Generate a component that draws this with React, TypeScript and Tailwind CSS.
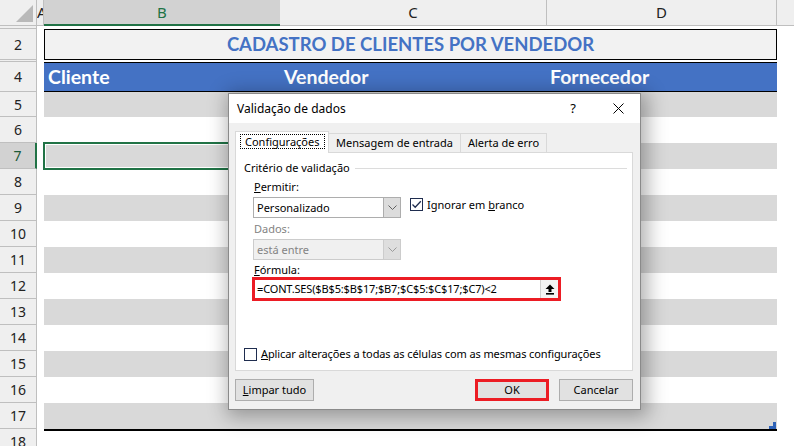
import React from "react";

const UI = "font-['Noto_Sans',sans-serif]";
const XL = "font-['Lato',sans-serif]";

type Kind = "hidden" | "title" | "head" | "band" | "plain" | "last";

interface RowDef {
  n: number;
  h: string;
  kind: Kind;
}

const ROWS: RowDef[] = [
  { n: 1, h: "h-[3px]", kind: "hidden" },
  { n: 2, h: "h-[31px]", kind: "title" },
  { n: 3, h: "h-[2px]", kind: "hidden" },
  { n: 4, h: "h-[30px]", kind: "head" },
  { n: 5, h: "h-[25px]", kind: "band" },
  { n: 6, h: "h-[26px]", kind: "plain" },
  { n: 7, h: "h-[26px]", kind: "band" },
  { n: 8, h: "h-[26px]", kind: "plain" },
  { n: 9, h: "h-[26px]", kind: "band" },
  { n: 10, h: "h-[26px]", kind: "plain" },
  { n: 11, h: "h-[26px]", kind: "band" },
  { n: 12, h: "h-[26px]", kind: "plain" },
  { n: 13, h: "h-[26px]", kind: "band" },
  { n: 14, h: "h-[26px]", kind: "plain" },
  { n: 15, h: "h-[26px]", kind: "band" },
  { n: 16, h: "h-[26px]", kind: "plain" },
  { n: 17, h: "h-[26px]", kind: "band" },
  { n: 18, h: "h-[26px]", kind: "last" },
];

function ColumnHeaders() {
  return (
    <div className={`flex h-[26px] bg-[#efefef] text-[15px] text-[#222] ${UI}`}>
      <div className="relative w-[37px] border-r border-b border-[#bfbfbf]">
        <svg width="36" height="25" className="absolute left-0 top-0">
          <polygon points="33,5 33,22 16,22" fill="#b9b9b9" />
        </svg>
      </div>
      <div className="w-[7px] overflow-hidden border-r border-b border-[#bfbfbf] leading-[24px]">A</div>
      <div className="flex w-[236px] items-center justify-center border-b-2 border-[#217346] bg-[#d2d2d2] text-[#217346]">
        B
      </div>
      <div className="flex w-[267px] items-center justify-center border-r border-b border-[#bfbfbf]">C</div>
      <div className="flex w-[230px] items-center justify-center border-r border-b border-[#bfbfbf]">D</div>
      <div className="flex-1 border-b border-[#bfbfbf]" />
    </div>
  );
}

function SheetRow({ row }: { row: RowDef }) {
  const active = row.n === 7;
  return (
    <div className={`flex ${row.h}`}>
      <div
        className={`flex w-[37px] items-center justify-center border-b border-[#bfbfbf] text-[14px] ${UI} ${
          active ? "border-r-2 border-r-[#217346] bg-[#d2d2d2] text-[#1d5a38]" : "border-r bg-[#efefef] text-[#222]"
        }`}
      >
        {row.kind !== "hidden" && row.n}
      </div>
      <div className="w-[7px]" />
      {row.kind === "title" && (
        <div
          className={`flex w-[733px] items-center justify-center border border-black bg-[#f2f2f2] text-[18.5px] font-bold text-[#4472c4] ${XL}`}
        >
          CADASTRO DE CLIENTES POR VENDEDOR
        </div>
      )}
      {row.kind === "head" && (
        <div className={`flex w-[733px] border-y border-black bg-[#4472c4] text-[19.5px] font-bold text-white ${XL}`}>
          <div className="w-[236px] pl-[4px] leading-[28px]">Cliente</div>
          <div className="w-[267px] pl-[4px] leading-[28px]">Vendedor</div>
          <div className="w-[230px] pl-[3px] leading-[28px]">Fornecedor</div>
        </div>
      )}
      {row.kind === "band" && (
        <div className="relative flex w-[733px] bg-[#d9d9d9]">
          {active && (
            <div className="absolute -left-px -top-px h-[28px] w-[238px] border-2 border-[#217346]">
              <div className="h-full w-full border border-white" />
            </div>
          )}
          {row.n === 17 && (
            <svg width="7" height="7" className="absolute bottom-0 right-[1px]">
              <path d="M4 0H7V7H0V4H4Z" fill="#2e62b8" />
            </svg>
          )}
        </div>
      )}
      {row.kind === "last" && <div className="w-[733px] border-t-2 border-black" />}
      <div className="flex-1" />
    </div>
  );
}

function Chevron({ color }: { color: string }) {
  return (
    <svg width="9" height="6" viewBox="0 0 9 6">
      <polyline points="0.5,0.5 4.5,4.5 8.5,0.5" fill="none" stroke={color} strokeWidth="1" />
    </svg>
  );
}

function Select({ value, disabled }: { value: string; disabled?: boolean }) {
  return (
    <div
      className={`flex h-[21px] w-[148px] border ${
        disabled ? "border-[#cccccc] bg-[#f0f0f0] text-[#838383]" : "border-[#adadad] bg-white text-black"
      }`}
    >
      <div className="flex-1 pl-[3px] leading-[19px]">{value}</div>
      <div
        className={`flex w-[17px] items-center justify-center border-l ${
          disabled ? "border-[#cccccc] bg-[#dedede]" : "border-[#adadad] bg-[#dcdcdc]"
        }`}
      >
        <Chevron color={disabled ? "#9a9a9a" : "#606060"} />
      </div>
    </div>
  );
}

function CheckBox({ checked }: { checked?: boolean }) {
  return (
    <span className="flex h-[13px] w-[13px] shrink-0 items-center justify-center border border-[#1f2d4f] bg-white">
      {checked && (
        <svg width="11" height="11" viewBox="0 0 11 11">
          <polyline points="1.5,5.5 4.2,8.2 9.8,2.2" fill="none" stroke="#1f2d4f" strokeWidth="1.3" />
        </svg>
      )}
    </span>
  );
}

function Button({ children, className }: { children: React.ReactNode; className?: string }) {
  return (
    <div
      className={`flex h-[22px] items-center justify-center border border-[#adadad] bg-[#e1e1e1] ${className ?? ""}`}
    >
      {children}
    </div>
  );
}

function ValidationDialog() {
  return (
    <div
      className={`absolute left-[228px] top-[93px] w-[413px] whitespace-nowrap border border-[#8a8a8a] bg-[#f0f0f0] text-[11px] text-black shadow-[3px_3px_18px_4px_rgba(0,0,0,0.3)] ${UI}`}
    >
      <div className="flex h-[29px] items-center bg-white text-[12px]">
        <span className="pl-[8px]">Validação de dados</span>
        <div className="flex-1" />
        <div className="flex w-[46px] justify-center text-[13px]">?</div>
        <div className="flex w-[44px] justify-center">
          <svg width="11" height="11" viewBox="0 0 11 11">
            <path d="M0.5 0.5L10.5 10.5M10.5 0.5L0.5 10.5" stroke="#000" strokeWidth="1" />
          </svg>
        </div>
      </div>

      <div className="pl-[6px] pr-[7px] pt-[8px] pb-[8px]">
        <div className="flex h-[21px] items-end">
          <div className="relative z-10 -mb-px flex h-[22px] w-[94px] items-start border-x border-t border-[#d9d9d9] bg-white pl-[4px] pt-[2px]">
            <span className="border border-dotted border-black px-[4px] leading-[13px]">Configurações</span>
          </div>
          <div className="flex h-[19px] w-[132px] items-center justify-center border-r border-t border-[#d9d9d9]">
            Mensagem de entrada
          </div>
          <div className="flex h-[19px] w-[86px] items-center justify-center border-r border-t border-[#d9d9d9]">
            Alerta de erro
          </div>
        </div>

        <div className="border border-[#d9d9d9] bg-white pl-[8px] pr-[5px] pt-[7px] pb-[8px]">
          <div className="flex items-center">
            <span className="leading-[16px]">Critério de validação</span>
            <div className="ml-[5px] h-px flex-1 bg-[#dcdcdc]" />
          </div>

          <div className="pl-[9px]">
            <div className="mt-[3px] pl-px leading-[16px]">
              <u>P</u>ermitir:
            </div>
            <div className="mt-[2px] flex items-start">
              <Select value="Personalizado" />
              <div className="ml-[9px] mt-[1px] flex items-center">
                <CheckBox checked />
                <span className="ml-[4px] leading-[13px]">
                  Ignorar em <u>b</u>ranco
                </span>
              </div>
            </div>
            <div className="mt-[3px] pl-px leading-[16px] text-[#838383]">Dados:</div>
            <div className="mt-[2px]">
              <Select value="está entre" disabled />
            </div>
            <div className="mt-[2px] pl-px leading-[15px]">
              <u>F</u>órmula:
            </div>
            <div className="-ml-px flex h-[24px] w-[309px] border-[3px] border-[#ec1c24]">
              <div className="flex-1 bg-white pl-[2px] leading-[17px] tracking-[-0.15px]">
                =CONT.SES($B$5:$B$17;$B7;$C$5:$C$17;$C7)&lt;2
              </div>
              <div className="flex w-[18px] items-center justify-center border-l border-[#cfcfcf] bg-[#f3f3f3]">
                <svg width="10" height="11" viewBox="0 0 10 11">
                  <path d="M5 0.5L9.5 5H6.5V8H3.5V5H0.5Z" fill="#000" />
                  <rect x="1" y="9" width="8" height="1.6" fill="#000" />
                </svg>
              </div>
            </div>
          </div>

          <div className="mt-[45px] flex items-center">
            <CheckBox />
            <span className="ml-[4px] leading-[16px] tracking-[-0.1px]">
              <u>A</u>plicar alterações a todas as células com as mesmas configurações
            </span>
          </div>
        </div>

        <div className="mt-[8px] flex items-center">
          <Button className="w-[79px]">
            <span>
              <u>L</u>impar tudo
            </span>
          </Button>
          <div className="flex-1" />
          <div className="h-[22px] w-[74px] border-[3px] border-[#ec1c24] bg-[#e1e1e1] text-center leading-[16px]">
            OK
          </div>
          <Button className="ml-[10px] w-[74px]">Cancelar</Button>
        </div>
      </div>
    </div>
  );
}

export default function App() {
  return (
    <div className="relative h-[446px] w-[794px] overflow-hidden bg-white">
      <ColumnHeaders />
      {ROWS.map((row) => (
        <SheetRow key={row.n} row={row} />
      ))}
      <ValidationDialog />
    </div>
  );
}
